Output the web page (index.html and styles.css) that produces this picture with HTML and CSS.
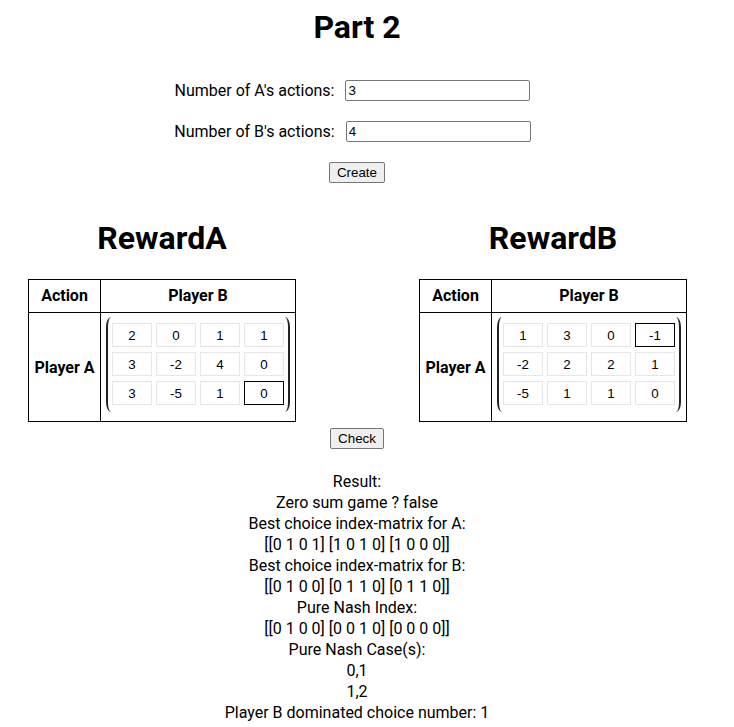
FILE: index.html
```html
<!DOCTYPE html>
<html lang="en">
<head>
<meta charset="utf-8">
<title>Part 2</title>
<link rel="stylesheet" href="styles.css">
</head>
<body>
<div class="page">
  <h1 class="title">Part 2</h1>

  <div class="form">
    <div class="form-row">
      <label class="form-label" for="na">Number of A's actions:</label>
      <input class="form-input" id="na" type="text" value="3">
    </div>
    <div class="form-row">
      <label class="form-label" for="nb">Number of B's actions:</label>
      <input class="form-input" id="nb" type="text" value="4">
    </div>
    <div class="form-row form-row-btn">
      <button class="btn" type="button">Create</button>
    </div>
  </div>

  <div class="boards">
    <section class="board">
      <h2 class="board-title">RewardA</h2>
      <table class="payoff">
        <tr>
          <th><div class="head head-action">Action</div></th>
          <th><div class="head head-player">Player B</div></th>
        </tr>
        <tr>
          <th class="row-label">Player A</th>
          <td class="matrix-cell">
            <div class="matrix">
              <span class="paren paren-left"></span>
              <div class="grid">
                <input class="cell" type="text" value="2">
                <input class="cell" type="text" value="0">
                <input class="cell" type="text" value="1">
                <input class="cell" type="text" value="1">
                <input class="cell" type="text" value="3">
                <input class="cell" type="text" value="-2">
                <input class="cell" type="text" value="4">
                <input class="cell" type="text" value="0">
                <input class="cell" type="text" value="3">
                <input class="cell" type="text" value="-5">
                <input class="cell" type="text" value="1">
                <input class="cell cell-active" type="text" value="0">
              </div>
              <span class="paren paren-right"></span>
            </div>
          </td>
        </tr>
      </table>
    </section>

    <section class="board">
      <h2 class="board-title">RewardB</h2>
      <table class="payoff">
        <tr>
          <th><div class="head head-action">Action</div></th>
          <th><div class="head head-player">Player B</div></th>
        </tr>
        <tr>
          <th class="row-label">Player A</th>
          <td class="matrix-cell">
            <div class="matrix">
              <span class="paren paren-left"></span>
              <div class="grid">
                <input class="cell" type="text" value="1">
                <input class="cell" type="text" value="3">
                <input class="cell" type="text" value="0">
                <input class="cell cell-active" type="text" value="-1">
                <input class="cell" type="text" value="-2">
                <input class="cell" type="text" value="2">
                <input class="cell" type="text" value="2">
                <input class="cell" type="text" value="1">
                <input class="cell" type="text" value="-5">
                <input class="cell" type="text" value="1">
                <input class="cell" type="text" value="1">
                <input class="cell" type="text" value="0">
              </div>
              <span class="paren paren-right"></span>
            </div>
          </td>
        </tr>
      </table>
    </section>
  </div>

  <div class="actions">
    <button class="btn" type="button">Check</button>
  </div>

  <div class="result">
    <div>Result:</div>
    <div>Zero sum game ? false</div>
    <div>Best choice index-matrix for A:</div>
    <div>[[0 1 0 1] [1 0 1 0] [1 0 0 0]]</div>
    <div>Best choice index-matrix for B:</div>
    <div>[[0 1 0 0] [0 1 1 0] [0 1 1 0]]</div>
    <div>Pure Nash Index:</div>
    <div>[[0 1 0 0] [0 0 1 0] [0 0 0 0]]</div>
    <div>Pure Nash Case(s):</div>
    <div>0,1</div>
    <div>1,2</div>
    <div>Player B dominated choice number: 1</div>
  </div>
</div>
</body>
</html>
```

FILE: styles.css
```css
html, body {
  margin: 0;
  padding: 0;
  background: #fff;
}

body {
  font-family: Roboto, "Liberation Sans", Arial, sans-serif;
  font-size: 16px;
  color: #000;
}

.page {
  width: 714px;
  padding-top: 9px;
}

.title {
  margin: 0;
  font-size: 32px;
  line-height: 37px;
  font-weight: 700;
  text-align: center;
}

.form {
  margin-top: 34px;
  display: flex;
  flex-direction: column;
  gap: 20px;
}

.form-row {
  display: flex;
  justify-content: center;
  align-items: center;
  height: 21px;
}

.form-label {
  margin-right: 11px;
}

.form-input {
  box-sizing: border-box;
  width: 185px;
  height: 21px;
  margin: 0 9px 0 0;
  padding: 1px 2px;
  font: 13.33px "Liberation Sans", Arial, sans-serif;
  color: #000;
  border: 1px solid #767676;
  border-radius: 2px;
  background: #fff;
}

.btn {
  box-sizing: border-box;
  height: 21px;
  margin: 0;
  padding: 1px 7px;
  font: 13.33px "Liberation Sans", Arial, sans-serif;
  color: #000;
  background: #efefef;
  border: 1px solid #767676;
  border-radius: 2px;
}

.boards {
  margin-top: 37px;
  display: flex;
  justify-content: space-between;
  padding: 0 27px 0 28px;
}

.board {
  width: 268px;
  display: flex;
  flex-direction: column;
  align-items: center;
}

.board-title {
  margin: 0 0 22px;
  font-size: 32px;
  line-height: 37px;
  font-weight: 700;
  white-space: nowrap;
}

.payoff {
  border-collapse: collapse;
  border: 1px solid #000;
}

.payoff th,
.payoff td {
  border: 1px solid #000;
  padding: 0;
  font-weight: 700;
  text-align: center;
}

.head {
  height: 32px;
  line-height: 32px;
}

.head-action {
  width: 71px;
}

.head-player {
  width: 194px;
}

.row-label {
  vertical-align: middle;
}

.matrix-cell {
  vertical-align: top;
}

.matrix {
  display: flex;
  justify-content: center;
  margin: 4px 0 9px;
  height: 95px;
}

.paren {
  box-sizing: border-box;
  width: 6px;
  height: 95px;
  border: 0 solid #222;
}

.paren-left {
  border-left-width: 2px;
  border-radius: 5px 0 0 5px / 10px 0 0 10px;
}

.paren-right {
  border-right-width: 2px;
  border-radius: 0 5px 5px 0 / 0 10px 10px 0;
}

.grid {
  display: grid;
  grid-template-columns: repeat(4, 40px);
  grid-auto-rows: 24px;
  column-gap: 4px;
  row-gap: 5px;
  padding: 6px 0 7px;
}

.cell {
  box-sizing: border-box;
  width: 40px;
  height: 24px;
  margin: 0;
  padding: 0;
  border: 1px solid #e6e6e6;
  border-radius: 0;
  background: #fff;
  font: 13.33px "Liberation Sans", Arial, sans-serif;
  color: #000;
  text-align: center;
}

.cell-active {
  border-color: #000;
}

.actions {
  margin-top: 6px;
  display: flex;
  justify-content: center;
}

.result {
  margin-top: 22px;
  text-align: center;
  line-height: 21px;
}
```
